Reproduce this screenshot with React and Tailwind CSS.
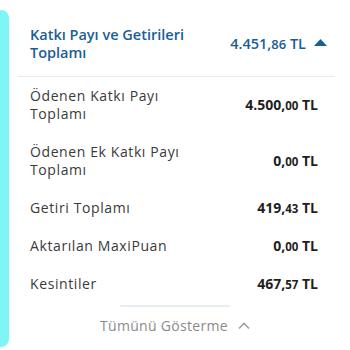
import React from "react";

const rows = [
    { label: ["Ödenen Katkı Payı", "Toplamı"], main: "4.500", cents: "00" },
    { label: ["Ödenen Ek Katkı Payı", "Toplamı"], main: "0", cents: "00" },
    { label: ["Getiri Toplamı"], main: "419", cents: "43" },
    { label: ["Aktarılan MaxiPuan"], main: "0", cents: "00" },
    { label: ["Kesintiler"], main: "467", cents: "57" },
];

const Amount = ({ main, cents }) => (
    <span className="font-bold text-[14px] leading-[17px] text-[#1f1f1f] whitespace-nowrap">
        {main},<span className="text-[11.5px]">{cents}</span> TL
    </span>
);

const App = () => {
    return (
        <div className="flex h-[350px] w-[350px] bg-white overflow-hidden" style={{ fontFamily: '"Open Sans", "Liberation Sans", sans-serif' }}>
            {/* cyan accent strip */}
            <div className="w-[9px] mt-[10px] mb-[3px] bg-[#7ef6f6] rounded-r-[8px] shrink-0"></div>

            <div className="flex-1 flex flex-col">
                {/* Header */}
                <div className="flex items-center justify-between pl-[21px] pr-[23px] pt-[26px] pb-[14px]">
                    <h2 className="text-[14.5px] leading-[18px] font-semibold text-[#1a5e96] w-[165px]">
                        Katkı Payı ve Getirileri Toplamı
                    </h2>
                    <div className="flex items-center gap-[8px] text-[#1a5e96] font-semibold">
                        <span className="text-[14.5px] whitespace-nowrap">
                            4.451,<span className="text-[13px]">86</span> TL
                        </span>
                        <svg width="13" height="8" viewBox="0 0 13 8" className="mb-[2px]">
                            <path d="M6.5 0 L13 7 L0 7 Z" fill="#1a5e96" />
                        </svg>
                    </div>
                </div>

                <div className="ml-[9px] mr-[15px] h-px bg-[#e8ebee]"></div>

                {/* Detail rows */}
                <div className="flex flex-col gap-[20px] pl-[21px] pr-[32px] pt-[10px]">
                    {rows.map((r, i) => (
                        <div key={i} className="flex items-center justify-between">
                            <p className="text-[14px] leading-[18px] tracking-[0.6px] text-[#3a3a3a]">
                                {r.label.map((l, j) => (
                                    <React.Fragment key={j}>
                                        {j > 0 && <br />}
                                        {l}
                                    </React.Fragment>
                                ))}
                            </p>
                            <Amount main={r.main} cents={r.cents} />
                        </div>
                    ))}
                </div>

                {/* footer toggle */}
                <div className="flex flex-col items-center mt-[12px] -ml-[9px]">
                    <div className="w-[110px] h-[2px] bg-[#e6edf3] rounded"></div>
                    <button className="flex items-center gap-[10px] mt-[9px] text-[14px] leading-[20px] tracking-[0.3px] text-[#8a8a8a]">
                        Tümünü Gösterme
                        <svg width="12" height="8" viewBox="0 0 12 8">
                            <path d="M1 6.5 L6 1.5 L11 6.5" fill="none" stroke="#a0a0a0" strokeWidth="1.6" />
                        </svg>
                    </button>
                </div>
            </div>
        </div>
    );
};

export default App;
